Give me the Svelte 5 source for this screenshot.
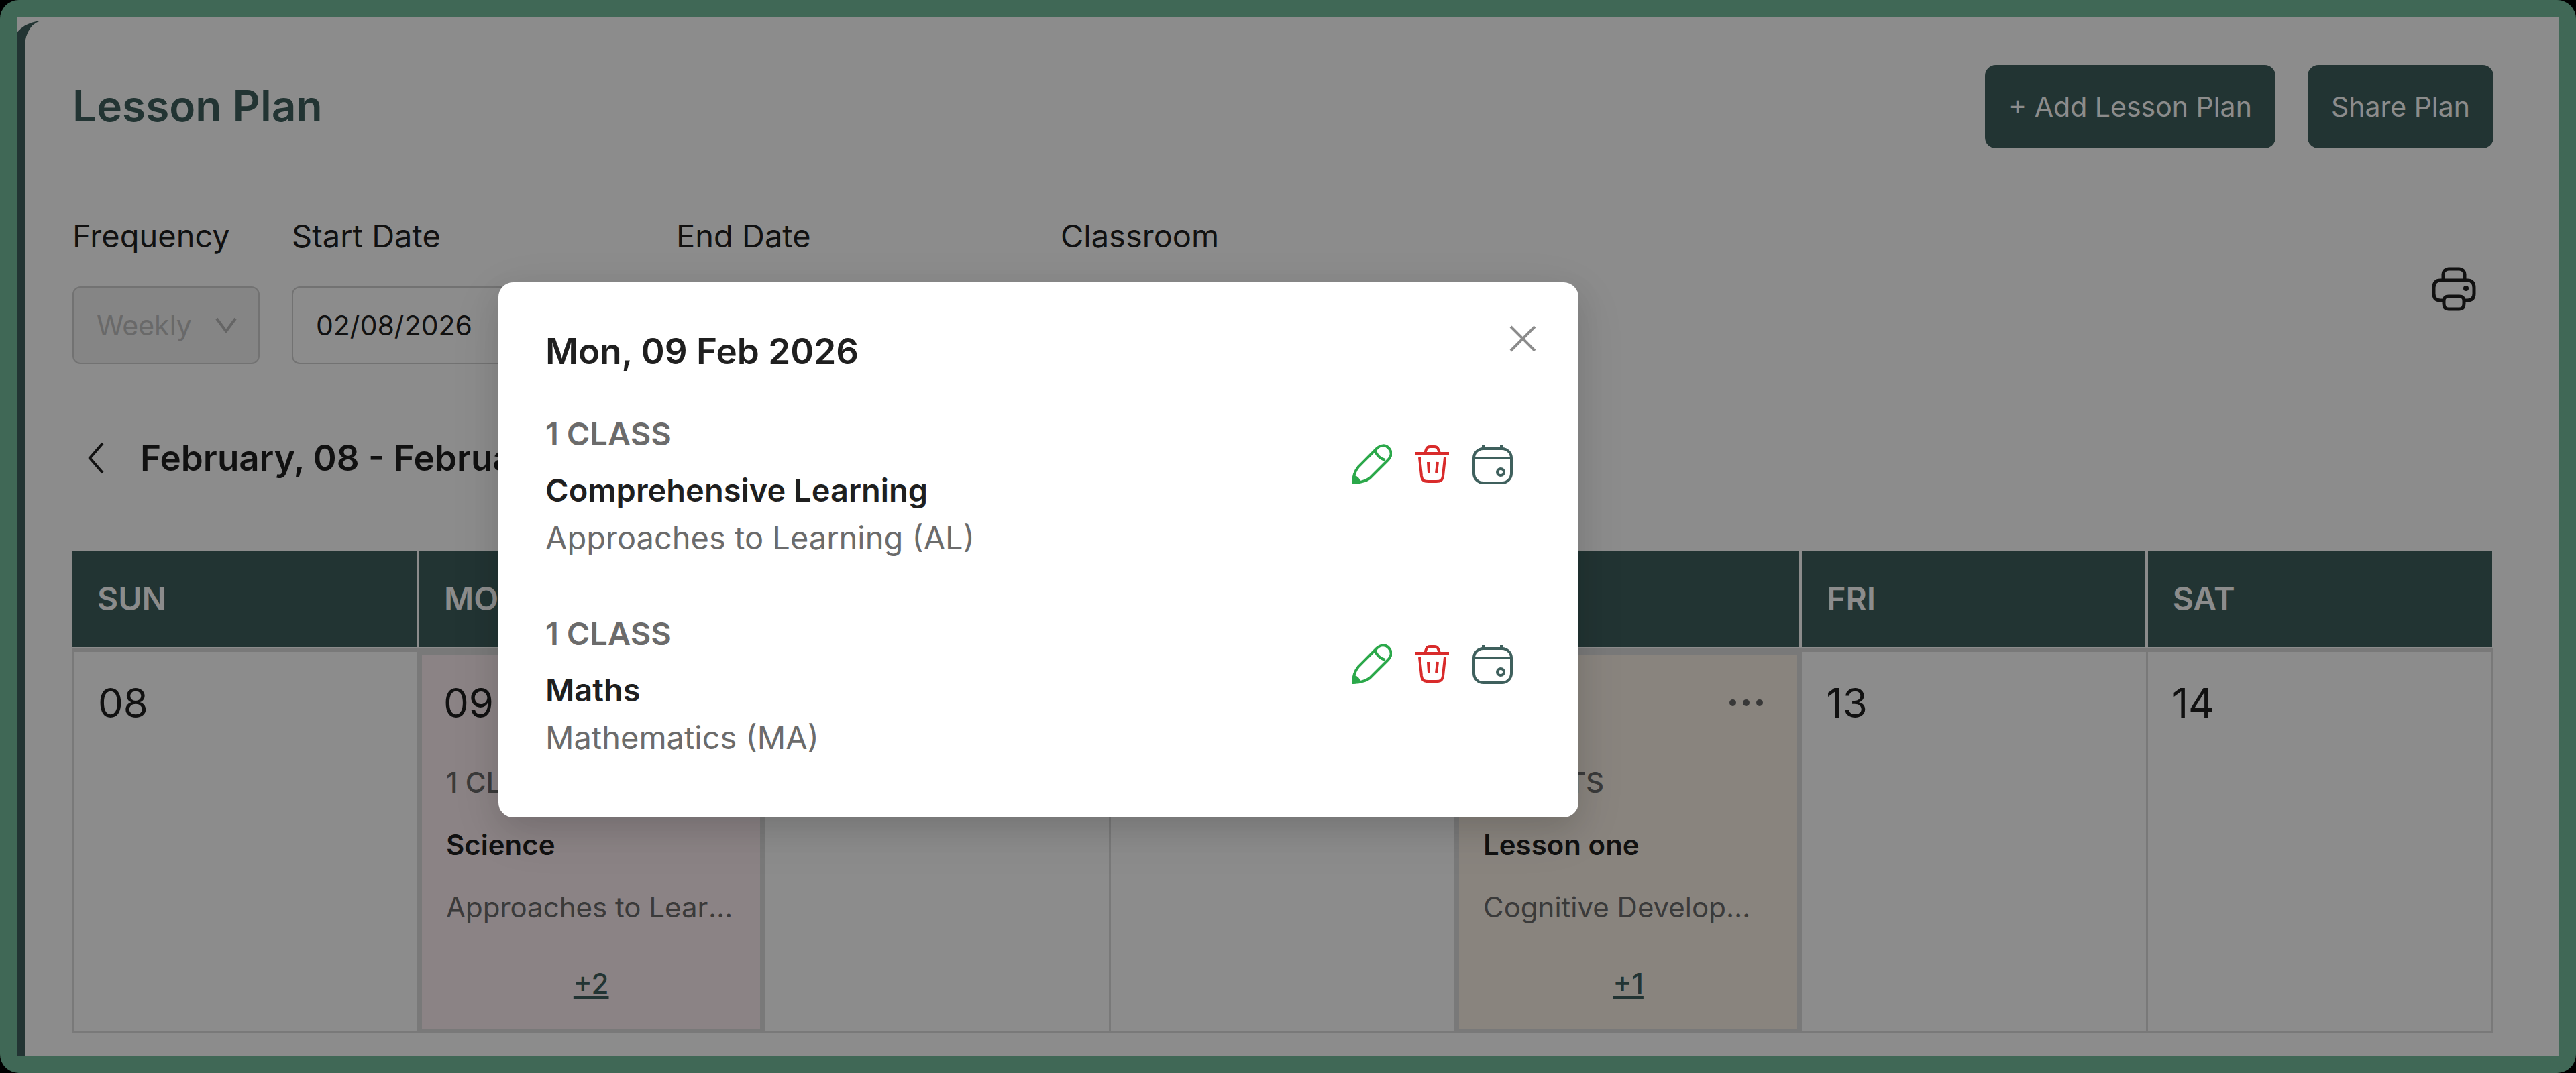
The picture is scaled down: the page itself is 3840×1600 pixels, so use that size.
<script lang="ts">
	type Entry = { group: string; title: string; domain: string };
	type Day = { name: string; date: string; tone?: string; entry?: Entry; more?: number };

	const days: Day[] = [
		{ name: 'SUN', date: '08' },
		{
			name: 'MON',
			date: '09',
			tone: 'pink',
			entry: { group: '1 CLASS', title: 'Science', domain: 'Approaches to Learning (AL)' },
			more: 2
		},
		{ name: 'TUE', date: '10' },
		{ name: 'WED', date: '11' },
		{
			name: 'THU',
			date: '12',
			tone: 'sand',
			entry: { group: 'INFANTS', title: 'Lesson one', domain: 'Cognitive Development (CD)' },
			more: 1
		},
		{ name: 'FRI', date: '13' },
		{ name: 'SAT', date: '14' }
	];

	const selected: Entry[] = [
		{ group: '1 CLASS', title: 'Comprehensive Learning', domain: 'Approaches to Learning (AL)' },
		{ group: '1 CLASS', title: 'Maths', domain: 'Mathematics (MA)' }
	];

	let startDate = $state('02/08/2026');
	let endDate = $state('02/14/2026');
	let open = $state(true);
</script>

<div class="frame">
	<div class="viewport">
		<main class="page">
			<header>
				<h1>Lesson Plan</h1>
				<div class="buttons">
					<button class="primary">+ Add Lesson Plan</button>
					<button class="primary">Share Plan</button>
				</div>
			</header>

			<div class="filters">
				<div class="field short">
					<label for="frequency">Frequency</label>
					<div class="select">
						<select id="frequency" disabled>
							<option>Weekly</option>
						</select>
						<svg viewBox="0 0 32 24"><path d="M2 2 16 21 30 2" /></svg>
					</div>
				</div>
				<div class="field">
					<label for="start">Start Date</label>
					<input id="start" type="text" bind:value={startDate} />
				</div>
				<div class="field">
					<label for="end">End Date</label>
					<input id="end" type="text" bind:value={endDate} />
				</div>
				<div class="field">
					<label for="classroom">Classroom</label>
					<div class="select">
						<select id="classroom">
							<option>All</option>
						</select>
						<svg viewBox="0 0 32 24"><path d="M2 2 16 21 30 2" /></svg>
					</div>
				</div>
				<button class="print" aria-label="Print">
					<svg viewBox="0 0 66 66">
						<path d="M17 20V11a8 8 0 0 1 8-8h16a8 8 0 0 1 8 8v9" />
						<path d="M17 50h-4c-7 0-10-4-10-10v-9c0-7 3-11 10-11h40c7 0 10 4 10 11v9c0 6-3 10-10 10h-4" />
						<path d="M25 44h16c5 0 7 2 7 7v4c0 5-2 8-7 8H25c-5 0-7-3-7-8v-4c0-5 2-7 7-7z" />
						<circle class="dot" cx="51" cy="32" r="4" />
					</svg>
				</button>
			</div>

			<nav>
				<button class="prev" aria-label="Previous week">
					<svg viewBox="0 0 24 48"><path d="M22 2 3 24l19 22" /></svg>
				</button>
				<h2>February, 08 - February, 14</h2>
			</nav>

			<table>
				<thead>
					<tr>
						{#each days as day}
							<th scope="col">{day.name}</th>
						{/each}
					</tr>
				</thead>
				<tbody>
					<tr>
						{#each days as day}
							<td class={day.tone}>
								<div class="date">
									<span>{day.date}</span>
									{#if day.entry}
										<button class="menu" aria-label="More actions">
											<svg viewBox="0 0 52 12">
												<circle cx="6" cy="6" r="5" />
												<circle cx="26" cy="6" r="5" />
												<circle cx="46" cy="6" r="5" />
											</svg>
										</button>
									{/if}
								</div>
								{#if day.entry}
									<div class="entry">
										<p class="group">{day.entry.group}</p>
										<p class="title">{day.entry.title}</p>
										<p>{day.entry.domain}</p>
									</div>
									<a class="more" href="#more">+{day.more}</a>
								{/if}
							</td>
						{/each}
					</tr>
				</tbody>
			</table>
		</main>

		{#if open}
			<div class="mask"></div>
			<div class="modal" role="dialog" aria-labelledby="modal-title">
				<button class="close" aria-label="Close" onclick={() => (open = false)}>
					<svg viewBox="0 0 40 40"><path d="M2 2 38 38M38 2 2 38" /></svg>
				</button>
				<h3 id="modal-title">Mon, 09 Feb 2026</h3>
				{#each selected as item}
					<section>
						<div class="details">
							<p class="group">{item.group}</p>
							<p class="title">{item.title}</p>
							<p>{item.domain}</p>
						</div>
						<div class="actions">
							<button class="edit" aria-label="Edit">
								<svg viewBox="0 0 60 60">
									<path d="M2 58C2 48 5 40 10 34L37 7c6-6 13-6 18-1s5 12-1 18L27 51C20 56 12 58 2 58z" />
									<path d="M35 9c1 7 7 13 15 15" />
									<path class="tip" d="M2 58l2-9c3 1 6 4 7 7z" />
								</svg>
							</button>
							<button class="delete" aria-label="Delete">
								<svg viewBox="0 0 60 60">
									<path d="M5 14h50M19 14l2-6c1-3 3-4 6-4h6c3 0 5 1 6 4l2 6" />
									<path d="M11 20l3 28c1 6 3 8 10 8h12c7 0 9-2 10-8l3-28M24 27l1 16M38 27l-2 16" />
								</svg>
							</button>
							<button class="schedule" aria-label="Schedule">
								<svg viewBox="0 0 60 60">
									<rect x="2" y="7" width="56" height="51" rx="14" />
									<path d="M3 21h54M16 2v7M43 2v7" />
									<circle cx="42" cy="42" r="5" />
								</svg>
							</button>
						</div>
					</section>
				{/each}
			</div>
		{/if}
	</div>
</div>

<style>
	:global(body) {
		background: #000;
	}

	.frame {
		--green: #3f605d;
		--text: #1f1f1f;
		--muted: #6b6b6b;
		--line: #dcdcdc;
		box-sizing: border-box;
		display: flex;
		min-height: 100vh;
		padding: 26px;
		border-radius: 28px;
		background: #406856;
		color: var(--text);
		font-family: Inter, 'Liberation Sans', sans-serif;
		font-size: 41px;
	}

	.viewport {
		position: relative;
		flex: 1;
		display: flex;
		overflow: hidden;
		background: #fff;
	}

	.page {
		flex: 1;
		min-width: 0;
		margin: 5px 0 0 -8px;
		padding: 66px 97px 32px 71px;
		border-left: 19px solid var(--green);
		border-top-left-radius: 46px 38px;
	}

	h1,
	h2,
	h3,
	p {
		margin: 0;
		font-weight: 400;
	}

	button {
		padding: 0;
		border: 0;
		background: none;
		color: inherit;
		font: inherit;
		cursor: pointer;
	}

	svg {
		display: block;
		fill: none;
		stroke: currentColor;
		stroke-width: 4;
	}

	header,
	nav,
	.buttons,
	.actions,
	.date {
		display: flex;
		align-items: center;
	}

	header,
	.date {
		justify-content: space-between;
	}

	h1 {
		padding-bottom: 4px;
		color: var(--green);
		font-size: 64px;
		font-weight: 600;
	}

	.buttons {
		gap: 48px;
	}

	.primary {
		height: 124px;
		padding: 0 35px;
		border-radius: 16px;
		background: var(--green);
		color: #fff;
	}

	.filters {
		display: flex;
		gap: 48px;
		margin-top: 102px;
	}

	.field {
		display: flex;
		flex-direction: column;
		gap: 46px;
		width: 525px;
	}

	.field.short {
		width: 279px;
	}

	label {
		font-size: 47px;
		line-height: 58px;
	}

	input,
	select {
		box-sizing: border-box;
		width: 100%;
		height: 116px;
		padding: 0 34px;
		border: 2px solid #d0d0d0;
		border-radius: 12px;
		background: #fff;
		color: inherit;
		font: inherit;
		appearance: none;
	}

	select:disabled {
		background: #f3f3f3;
		color: #bfbfbf;
		opacity: 1;
	}

	.select {
		position: relative;
		color: #b8b8b8;
	}

	.select svg {
		position: absolute;
		top: 46px;
		right: 34px;
		width: 32px;
	}

	.print {
		align-self: center;
		margin-left: auto;
		padding: 0 26px 4px 0;
	}

	.print svg {
		width: 66px;
		stroke-width: 5;
	}

	.print .dot {
		fill: currentColor;
		stroke: none;
	}

	nav {
		gap: 54px;
		margin: 108px 0 107px;
		padding-left: 23px;
	}

	nav svg {
		width: 24px;
	}

	h2 {
		font-size: 53px;
		font-weight: 600;
		line-height: 64px;
	}

	table {
		width: 100%;
		border-spacing: 0;
		table-layout: fixed;
	}

	th {
		box-sizing: border-box;
		height: 145px;
		padding: 0 37px 2px;
		border-right: 4px solid #fff;
		border-bottom: 2px solid #fff;
		background: var(--green);
		color: #fff;
		font-size: 48px;
		font-weight: 600;
		text-align: left;
	}

	th:first-child {
		width: 517px;
	}

	th:last-child {
		border-right-width: 2px;
	}

	td {
		height: 482px;
		padding: 40px 36px 44px;
		border: solid var(--line);
		border-width: 5px 3px 3px 0;
		vertical-align: top;
	}

	td:first-child {
		border-left-width: 2px;
	}

	td.pink {
		background: #fdeef2;
		box-shadow: inset 0 0 0 4px var(--line);
	}

	td.sand {
		background: #faf1e6;
		box-shadow: inset 0 0 0 4px var(--line);
	}

	.date {
		font-size: 60px;
		line-height: 72px;
	}

	.menu {
		padding-right: 18px;
		color: #666;
	}

	.menu svg {
		width: 52px;
		fill: currentColor;
		stroke: none;
	}

	.entry {
		display: grid;
		gap: 42px;
		margin: 57px 0 63px;
		padding: 0 4px;
		color: var(--muted);
		font-size: 42px;
		line-height: 51px;
	}

	.entry p {
		overflow: hidden;
		text-overflow: ellipsis;
		white-space: nowrap;
	}

	.entry .group {
		font-weight: 500;
	}

	.entry .title,
	.details .title {
		color: var(--text);
		font-weight: 600;
	}

	.more {
		display: block;
		color: var(--green);
		font-size: 42px;
		font-weight: 500;
		line-height: 51px;
		text-align: center;
	}

	.mask {
		position: absolute;
		inset: 0;
		background: rgb(0 0 0 / 45%);
	}

	.modal {
		position: absolute;
		top: 395px;
		left: 717px;
		box-sizing: border-box;
		width: 1610px;
		padding: 70px 98px 84px 70px;
		border-radius: 22px;
		background: #fff;
		box-shadow:
			0 16px 40px rgb(0 0 0 / 10%),
			0 20px 80px rgb(0 0 0 / 8%);
		font-size: 47px;
	}

	h3 {
		font-size: 53px;
		font-weight: 600;
		line-height: 66px;
	}

	.close {
		position: absolute;
		top: 64px;
		right: 63px;
		color: #8c8c8c;
	}

	.close svg {
		width: 40px;
	}

	section {
		display: flex;
		justify-content: space-between;
		margin-top: 54px;
	}

	section + section {
		margin-top: 72px;
	}

	.details {
		color: var(--muted);
		line-height: 71px;
	}

	.details .group {
		margin-bottom: 13px;
		font-weight: 600;
	}

	.actions {
		gap: 30px;
		align-self: flex-start;
		margin-top: 51px;
	}

	.actions svg {
		width: 60px;
	}

	.edit {
		color: #2ba84a;
	}

	.edit .tip {
		fill: currentColor;
	}

	.delete {
		color: #d92b2b;
	}

	.schedule {
		color: var(--green);
	}
</style>
